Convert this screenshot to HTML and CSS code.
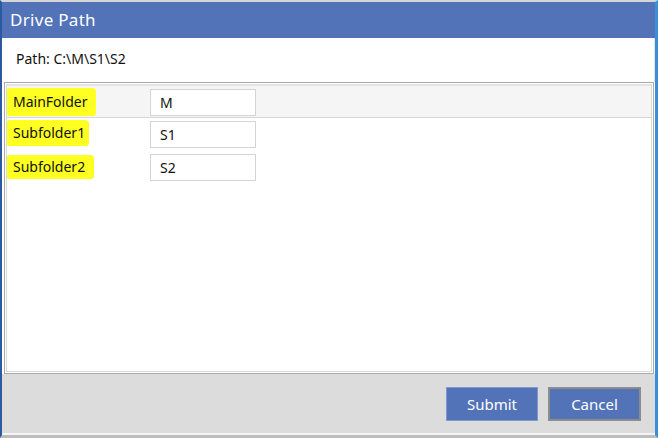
FILE: index.html
```html
<!DOCTYPE html>
<html>
<head>
<meta charset="utf-8">
<link rel="stylesheet" href="styles.css">
</head>
<body>
<div class="window">
  <div class="titlebar">Drive Path</div>
  <div class="pathbar">Path: C:\M\S1\S2</div>
  <div class="grid-outer">
    <div class="grid-inner">
      <div class="row row-selected">
        <div class="cell-label"><span class="hl hl-1">MainFolder</span></div>
        <div class="cell-value"><div class="textbox">M</div></div>
      </div>
      <div class="row">
        <div class="cell-label"><span class="hl hl-2">Subfolder1</span></div>
        <div class="cell-value"><div class="textbox">S1</div></div>
      </div>
      <div class="row">
        <div class="cell-label"><span class="hl hl-3">Subfolder2</span></div>
        <div class="cell-value"><div class="textbox">S2</div></div>
      </div>
    </div>
  </div>
  <div class="footer">
    <button class="btn btn-submit">Submit</button>
    <button class="btn btn-cancel">Cancel</button>
  </div>
</div>
</body>
</html>
```

FILE: styles.css
```css
html, body {
  margin: 0;
  padding: 0;
  width: 658px;
  height: 438px;
  overflow: hidden;
  background: #ffffff;
  font-family: "Noto Sans", "Open Sans", sans-serif;
}

.window {
  box-sizing: border-box;
  width: 658px;
  height: 438px;
  display: flex;
  flex-direction: column;
  border-top: 2px solid #d6d6d6;
  border-left: 2px solid #2d5a9e;
  border-right: 3px solid #3a8fd8;
  border-bottom: 3px solid #bdbdbd;
  background: #ffffff;
}

.titlebar {
  height: 36px;
  flex: none;
  background: #5273b7;
  color: #ffffff;
  font-size: 17px;
  line-height: 35px;
  padding-left: 8px;
  box-sizing: border-box;
  letter-spacing: 0.3px;
}

.pathbar {
  height: 44px;
  flex: none;
  box-sizing: border-box;
  padding: 11px 0 0 14px;
  font-size: 14px;
  color: #111111;
  border-right: 1px solid #e2e2e2;
}

.grid-outer {
  flex: none;
  height: 292px;
  margin: 0 1px 0 2px;
  border: 1px solid #a9a9a9;
  box-sizing: border-box;
  padding: 1px;
  background: #ffffff;
}

.grid-inner {
  height: 100%;
  box-sizing: border-box;
  border: 1px solid #d9d9d9;
  border-top: 2px solid #e3e3e3;
  display: flex;
  flex-direction: column;
}

.row {
  display: flex;
  align-items: center;
  height: 33px;
  flex: none;
}

.row-selected {
  height: 31px;
  background: #f5f5f5;
  border-bottom: 1px solid #d6d6d6;
}

.cell-label {
  width: 143px;
  flex: none;
  font-size: 14px;
  color: #111111;
}

.hl {
  display: inline-block;
  background: #ffff22;
  padding: 0 6px;
  border-radius: 2px 4px 3px 2px;
}

.hl-1 {
  line-height: 28px;
  padding-right: 9px;
  margin-top: 1px;
}

.hl-2 {
  line-height: 26px;
  padding-right: 4px;
  margin-top: -4px;
}

.hl-3 {
  line-height: 24px;
  padding-right: 9px;
  margin-top: -6px;
}

.cell-value {
  flex: none;
}

.textbox {
  box-sizing: border-box;
  width: 106px;
  height: 27px;
  border: 1px solid #d4d4d4;
  background: #ffffff;
  font-size: 14px;
  color: #111111;
  line-height: 25px;
  padding-left: 9px;
}

.row-selected .textbox {
  margin-top: 2px;
}

.footer {
  flex: 1;
  background: #dcdcdc;
  display: flex;
  justify-content: flex-end;
  align-items: flex-start;
  gap: 10px;
  padding: 13px 14px 0 0;
  border-bottom: 2px solid #f4f4f4;
}

.btn {
  box-sizing: border-box;
  height: 34px;
  background: #5273b7;
  color: #ffffff;
  font-family: "Noto Sans", "Open Sans", sans-serif;
  font-size: 15px;
  padding: 0;
  margin: 0;
}

.btn-submit {
  width: 92px;
  border: 1px solid #7f97cc;
}

.btn-cancel {
  width: 93px;
  border: 2px solid #8c8c8c;
}
```
